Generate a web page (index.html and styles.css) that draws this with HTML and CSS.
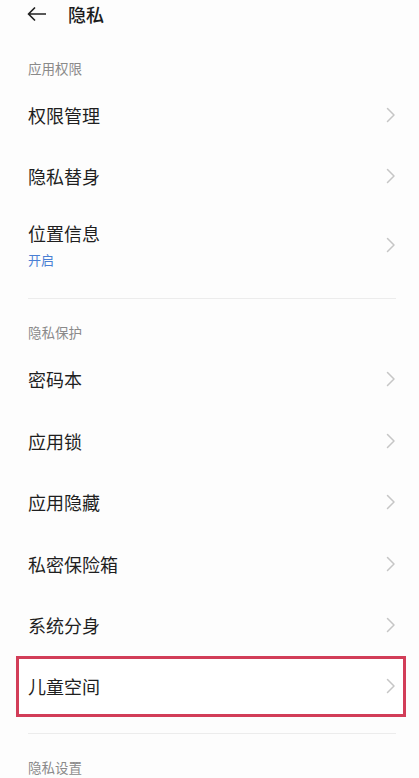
FILE: index.html
```html
<!DOCTYPE html>
<html lang="zh-CN">
<head>
<meta charset="utf-8">
<title>隐私</title>
<link rel="stylesheet" href="styles.css">
</head>
<body>
<div class="page">
  <header class="topbar">
    <svg class="back" width="19" height="14" viewBox="0 0 19 14" aria-hidden="true">
      <path d="M18.5 7H1.5M7.5 1L1.5 7l6 6" fill="none" stroke="#222" stroke-width="1.7" stroke-linecap="round" stroke-linejoin="round"/>
    </svg>
    <h1 class="title">隐私</h1>
  </header>

  <section class="group group-first">
    <div class="group-label">应用权限</div>
    <ul class="list">
      <li class="row"><span class="row-title">权限管理</span><svg class="chev" width="10" height="16" viewBox="0 0 10 16"><path d="M1.5 1.5L8 8l-6.5 6.5" fill="none" stroke="#c6c6c6" stroke-width="1.5" stroke-linecap="round" stroke-linejoin="round"/></svg></li>
      <li class="row"><span class="row-title">隐私替身</span><svg class="chev" width="10" height="16" viewBox="0 0 10 16"><path d="M1.5 1.5L8 8l-6.5 6.5" fill="none" stroke="#c6c6c6" stroke-width="1.5" stroke-linecap="round" stroke-linejoin="round"/></svg></li>
      <li class="row row-tall">
        <div class="row-text">
          <span class="row-title">位置信息</span>
          <span class="row-sub">开启</span>
        </div>
        <svg class="chev" width="10" height="16" viewBox="0 0 10 16"><path d="M1.5 1.5L8 8l-6.5 6.5" fill="none" stroke="#c6c6c6" stroke-width="1.5" stroke-linecap="round" stroke-linejoin="round"/></svg>
      </li>
    </ul>
  </section>

  <div class="divider"></div>

  <section class="group">
    <div class="group-label">隐私保护</div>
    <ul class="list">
      <li class="row"><span class="row-title">密码本</span><svg class="chev" width="10" height="16" viewBox="0 0 10 16"><path d="M1.5 1.5L8 8l-6.5 6.5" fill="none" stroke="#c6c6c6" stroke-width="1.5" stroke-linecap="round" stroke-linejoin="round"/></svg></li>
      <li class="row"><span class="row-title">应用锁</span><svg class="chev" width="10" height="16" viewBox="0 0 10 16"><path d="M1.5 1.5L8 8l-6.5 6.5" fill="none" stroke="#c6c6c6" stroke-width="1.5" stroke-linecap="round" stroke-linejoin="round"/></svg></li>
      <li class="row"><span class="row-title">应用隐藏</span><svg class="chev" width="10" height="16" viewBox="0 0 10 16"><path d="M1.5 1.5L8 8l-6.5 6.5" fill="none" stroke="#c6c6c6" stroke-width="1.5" stroke-linecap="round" stroke-linejoin="round"/></svg></li>
      <li class="row"><span class="row-title">私密保险箱</span><svg class="chev" width="10" height="16" viewBox="0 0 10 16"><path d="M1.5 1.5L8 8l-6.5 6.5" fill="none" stroke="#c6c6c6" stroke-width="1.5" stroke-linecap="round" stroke-linejoin="round"/></svg></li>
      <li class="row"><span class="row-title">系统分身</span><svg class="chev" width="10" height="16" viewBox="0 0 10 16"><path d="M1.5 1.5L8 8l-6.5 6.5" fill="none" stroke="#c6c6c6" stroke-width="1.5" stroke-linecap="round" stroke-linejoin="round"/></svg></li>
      <li class="row row-highlight"><span class="row-title">儿童空间</span><svg class="chev" width="10" height="16" viewBox="0 0 10 16"><path d="M1.5 1.5L8 8l-6.5 6.5" fill="none" stroke="#c6c6c6" stroke-width="1.5" stroke-linecap="round" stroke-linejoin="round"/></svg></li>
    </ul>
  </section>

  <div class="divider divider-last"></div>

  <section class="group">
    <div class="group-label">隐私设置</div>
  </section>
</div>
</body>
</html>
```

FILE: styles.css
```css
* { box-sizing: border-box; }

html, body {
  margin: 0;
  padding: 0;
  background: #fdfdfd;
}

body {
  font-family: "Noto Sans CJK SC", "Noto Sans", sans-serif;
  color: #1f1f1f;
  overflow: hidden;
}

.page {
  width: 419px;
  height: 778px;
  overflow: hidden;
}

.topbar {
  height: 28px;
  display: flex;
  align-items: center;
  padding-left: 27px;
  gap: 22px;
}

.back { display: block; flex: none; }

.title {
  margin: 0;
  font-size: 18px;
  font-weight: 500;
  line-height: 28px;
  color: #1c1c1c;
}

.group { margin-top: 23px; }
.group-first { margin-top: 30px; }

.group-label {
  height: 20px;
  line-height: 20px;
  padding-left: 28px;
  margin-bottom: 6.3px;
  font-size: 13.5px;
  color: #8a8a8a;
}

.list {
  list-style: none;
  margin: 0;
  padding: 0;
}

.row {
  height: 61.4px;
  margin: 0 13px 0 16px;
  padding: 0 10px 0 12px;
  display: flex;
  align-items: center;
  justify-content: space-between;
}

.row-tall { height: 76.3px; }

.row-text {
  display: flex;
  flex-direction: column;
  gap: 6px;
}

.row-title {
  font-size: 18px;
  line-height: 24px;
  color: #1f1f1f;
}

.row-sub {
  font-size: 13px;
  line-height: 18px;
  color: #4a7fd4;
}

.chev { display: block; flex: none; }

.row-highlight {
  background: #ffffff;
  outline: 3.5px solid #d23d58;
  outline-offset: -3.5px;
}

.divider {
  height: 1px;
  background: #ececec;
  margin: 15px 23px 0 28px;
}

.divider-last { margin-top: 16px; }
```
